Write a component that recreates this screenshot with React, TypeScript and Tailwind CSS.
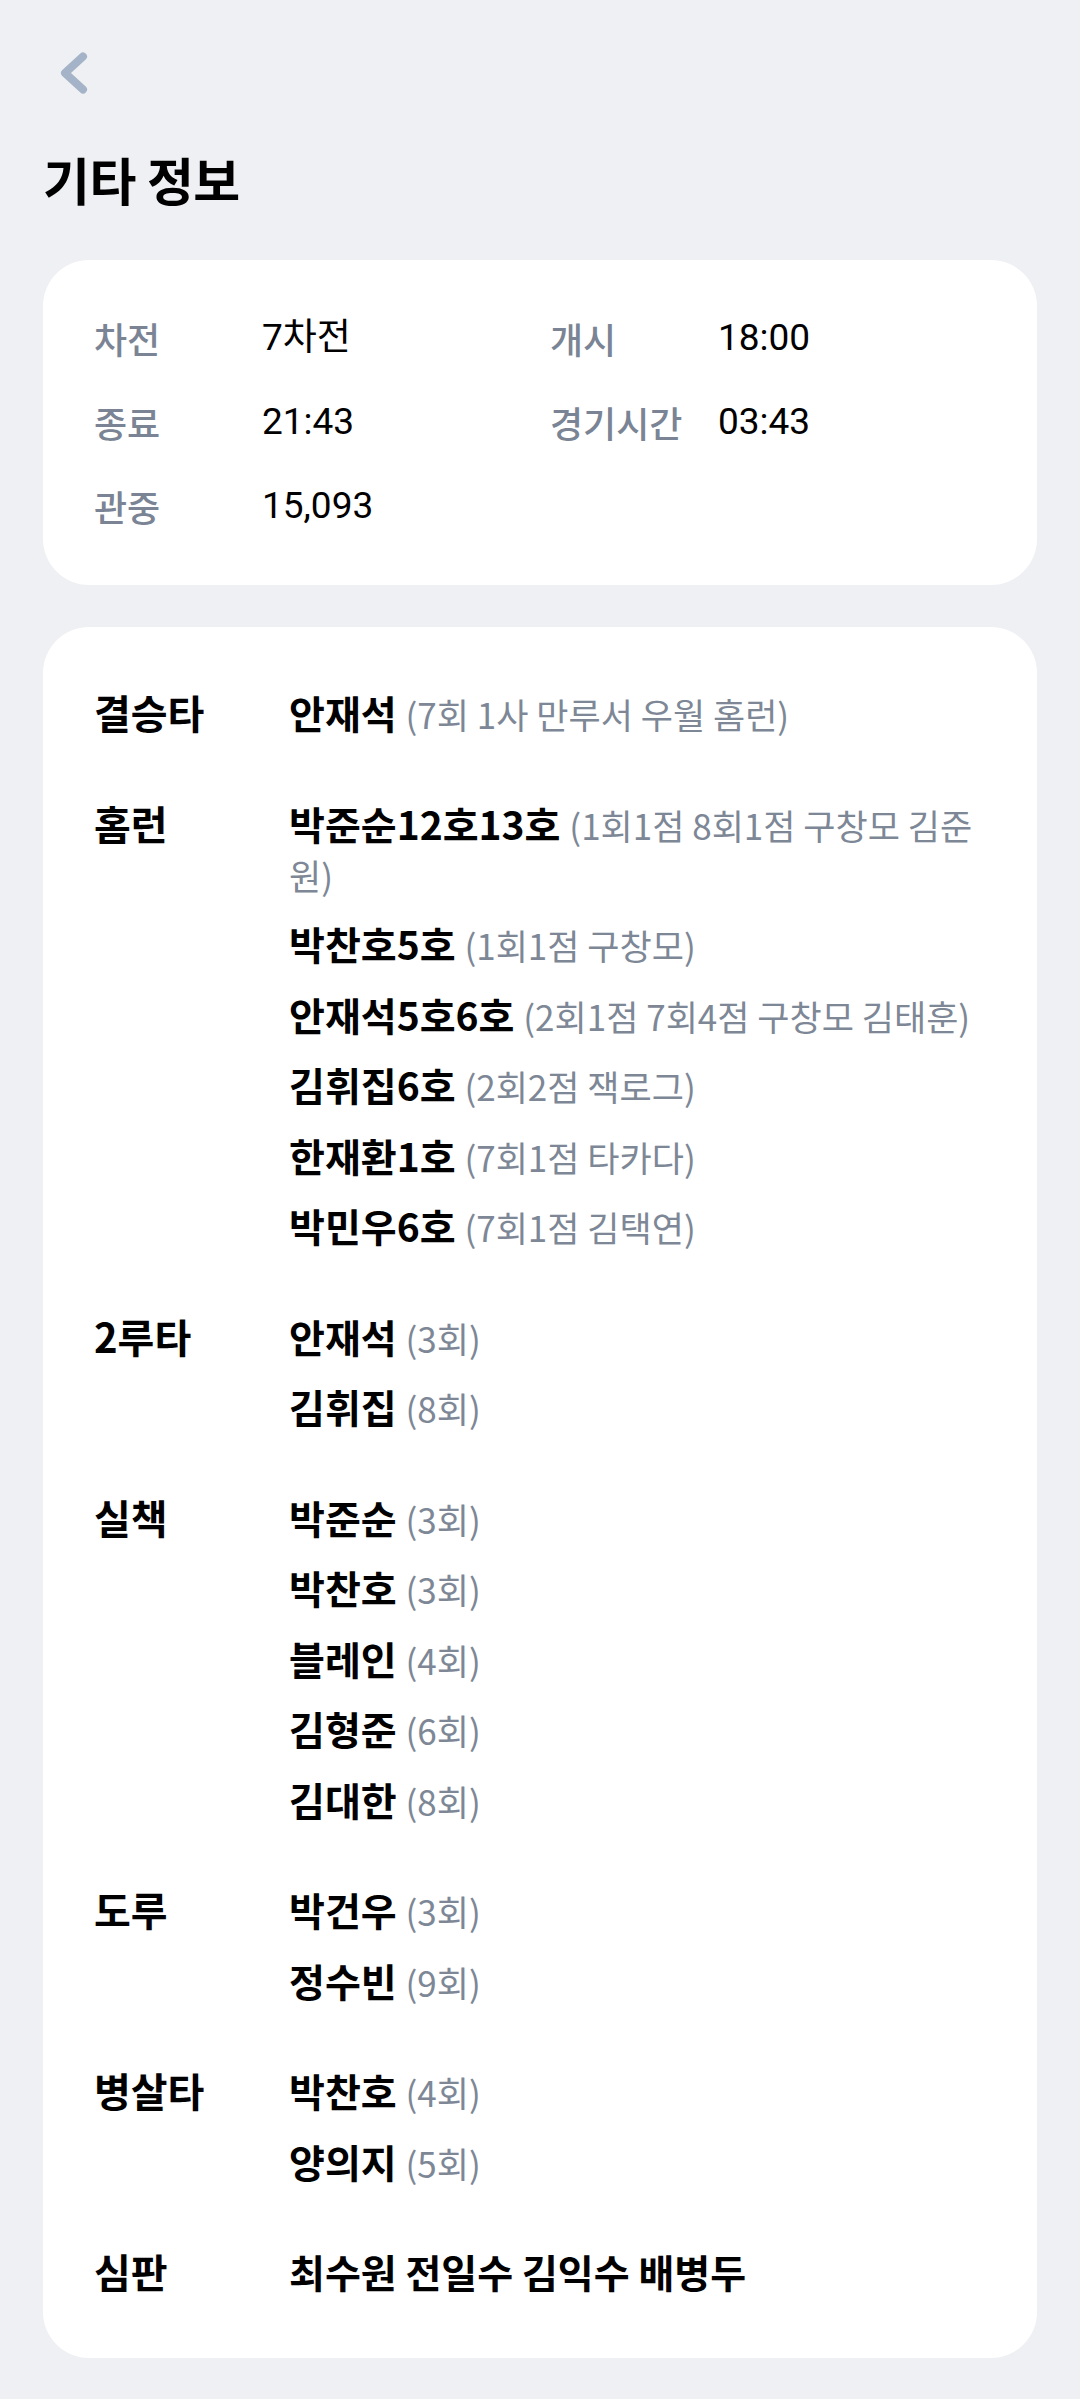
import React from 'react';

type Entry = { name: string; note?: string };
type Section = { label: string; entries: Entry[] };

const summary: { label: string; value: string }[] = [
  { label: '차전', value: '7차전' },
  { label: '개시', value: '18:00' },
  { label: '종료', value: '21:43' },
  { label: '경기시간', value: '03:43' },
  { label: '관중', value: '15,093' },
];

const sections: Section[] = [
  { label: '결승타', entries: [{ name: '안재석', note: '(7회 1사 만루서 우월 홈런)' }] },
  {
    label: '홈런',
    entries: [
      { name: '박준순12호13호', note: '(1회1점 8회1점 구창모 김준원)' },
      { name: '박찬호5호', note: '(1회1점 구창모)' },
      { name: '안재석5호6호', note: '(2회1점 7회4점 구창모 김태훈)' },
      { name: '김휘집6호', note: '(2회2점 잭로그)' },
      { name: '한재환1호', note: '(7회1점 타카다)' },
      { name: '박민우6호', note: '(7회1점 김택연)' },
    ],
  },
  {
    label: '2루타',
    entries: [
      { name: '안재석', note: '(3회)' },
      { name: '김휘집', note: '(8회)' },
    ],
  },
  {
    label: '실책',
    entries: [
      { name: '박준순', note: '(3회)' },
      { name: '박찬호', note: '(3회)' },
      { name: '블레인', note: '(4회)' },
      { name: '김형준', note: '(6회)' },
      { name: '김대한', note: '(8회)' },
    ],
  },
  {
    label: '도루',
    entries: [
      { name: '박건우', note: '(3회)' },
      { name: '정수빈', note: '(9회)' },
    ],
  },
  {
    label: '병살타',
    entries: [
      { name: '박찬호', note: '(4회)' },
      { name: '양의지', note: '(5회)' },
    ],
  },
  { label: '심판', entries: [{ name: '최수원 전일수 김익수 배병두' }] },
];

const BackIcon = () => (
  <svg width="28" height="42" viewBox="0 0 28 42" fill="none">
    <polyline
      points="23,4.5 5,21 23,37.5"
      stroke="#a4b3c7"
      strokeWidth="8"
      strokeLinecap="round"
      strokeLinejoin="round"
    />
  </svg>
);

export default function App() {
  return (
    <div className="min-h-screen bg-[#eff0f3] px-[43px] pb-[42px] font-['Noto_Sans_CJK_KR',sans-serif] text-black">
      {/* Header */}
      <div className="pt-[52px] pl-[17px]">
        <button className="block">
          <BackIcon />
        </button>
      </div>
      <h1 className="mt-[60px] text-[51px] leading-none font-bold tracking-[-0.5px]">기타 정보</h1>

      {/* Game summary */}
      <div className="mt-[55px] rounded-[46px] bg-white pl-[51px] pr-[51px] pt-[53px] pb-[54px]">
        <div className="grid grid-cols-2 gap-x-[20px] gap-y-[34px]">
          {summary.map(({ label, value }) => (
            <div key={label} className="flex h-[50px] items-center">
              <span className="w-[168px] shrink-0 text-[36px] leading-[50px] text-[#7a8494] font-medium">{label}</span>
              <span className="font-['Roboto','Noto_Sans_CJK_KR',sans-serif] text-[37px] leading-[50px] text-black">
                {value}
              </span>
            </div>
          ))}
        </div>
      </div>

      {/* Records */}
      <div className="mt-[42px] rounded-[46px] bg-white pl-[51px] pr-[51px] pt-[60px] pb-[62px]">
        <div className="flex flex-col gap-y-[60.5px]">
          {sections.map((section) => (
            <div key={section.label} className="flex">
              <div className="w-[195px] shrink-0 text-[40px] leading-[50px] font-bold">{section.label}</div>
              <div className="flex flex-1 flex-col gap-y-[20.5px]">
                {section.entries.map((entry) => (
                  <p key={entry.name} className="text-[39px] leading-[50px] font-bold">
                    {entry.name}
                    {entry.note && (
                      <>
                        {' '}
                        <span className="text-[35px] leading-none font-normal text-[#7d8796]">{entry.note}</span>
                      </>
                    )}
                  </p>
                ))}
              </div>
            </div>
          ))}
        </div>
      </div>
    </div>
  );
}
